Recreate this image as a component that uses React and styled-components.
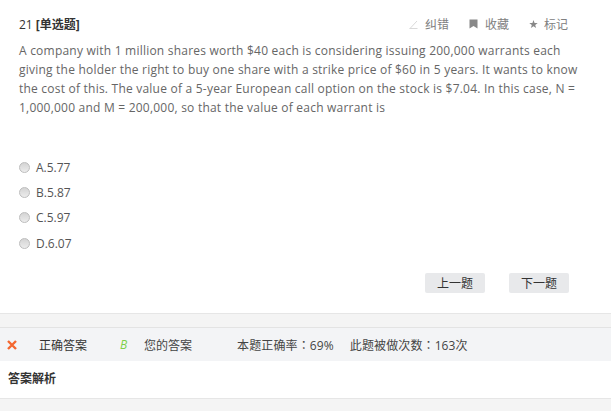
import React from "react";
import styled, { createGlobalStyle } from "styled-components";

const GlobalStyle = createGlobalStyle`
  html, body {
    margin: 0;
    padding: 0;
    background: #f4f4f4;
  }
  body {
    font-family: "Open Sans", "Noto Sans CJK SC", sans-serif;
    font-size: 12px;
  }
`;

const Page = styled.div`
  width: 611px;
  height: 411px;
  overflow: hidden;
  display: flex;
  flex-direction: column;
`;

const Question = styled.section`
  height: 298px;
  background: #fff;
  padding: 15px 19px 0 19px;
  border-bottom: 1px solid #e6e6e6;
`;

const TitleRow = styled.div`
  display: flex;
  justify-content: space-between;
  align-items: center;
  height: 18px;
`;

const Title = styled.div`
  font-size: 12px;
  color: #333;
  b {
    font-weight: 700;
  }
`;

const Tools = styled.div`
  display: flex;
  gap: 20px;
  padding-right: 24px;
`;

const Tool = styled.span`
  display: flex;
  align-items: center;
  gap: ${(p) => p.$gap || 7}px;
  font-size: 12px;
  color: #808080;
  svg {
    display: block;
  }
`;

const Stem = styled.p`
  margin: 8px 0 0;
  font-size: 12px;
  line-height: 19px;
  color: #666;
  white-space: nowrap;
  letter-spacing: 0.22px;
`;

const Options = styled.ul`
  list-style: none;
  margin: 41px 0 0;
  padding: 0;
  display: flex;
  flex-direction: column;
  gap: 7.4px;
`;

const Option = styled.li`
  display: flex;
  align-items: center;
  gap: 6px;
  height: 18px;
  font-size: 12px;
  color: #555;
`;

const Radio = styled.span`
  width: 11px;
  height: 11px;
  box-sizing: border-box;
  border-radius: 50%;
  border: 1px solid #bdbdbd;
  background: linear-gradient(#d4d4d4, #ececec);
`;

const Pager = styled.div`
  display: flex;
  justify-content: flex-end;
  gap: 24px;
  margin-top: 21px;
  padding-right: 23px;
`;

const PageButton = styled.button`
  width: 60px;
  height: 20px;
  border: 0;
  border-radius: 2px;
  background: #e8e9eb;
  color: #333;
  font: inherit;
  font-size: 12px;
  padding: 0;
`;

const AnswerBar = styled.div`
  margin-top: 13px;
  height: 33px;
  border-top: 1px solid #e3e3e3;
  background: #f3f4f6;
  display: flex;
  align-items: center;
  padding-left: 7px;
  font-size: 12px;
  color: #333;
`;

const Cross = styled.svg`
  width: 10px;
  height: 10px;
  margin-right: 22px;
`;

const Letter = styled.i`
  color: #7ed04b;
  margin-left: 33px;
  width: 24px;
`;

const Label = styled.span`
  color: ${(p) => p.$color || "#333"};
  margin-left: ${(p) => p.$left || 0}px;
`;

const Stat = styled.span`
  color: #444;
  letter-spacing: 0.12px;
  margin-left: ${(p) => p.$left}px;
`;

// the reference centres the full-width colon in its cell, as the TC face does
const Colon = styled.span`
  font-family: "Noto Sans CJK TC", sans-serif;
`;

const Analysis = styled.div`
  height: 29px;
  background: #fff;
  border-bottom: 1px solid #e6e6e6;
  padding: 8px 8px 0;
  font-size: 12px;
  font-weight: 700;
  color: #333;
`;

export default function App() {
  return (
    <Page>
      <GlobalStyle />
      <Question>
        <TitleRow>
          <Title>
            21 <b>[单选题]</b>
          </Title>
          <Tools>
            <Tool>
              <svg width="9" height="9" viewBox="0 0 9 9">
                <path d="M1 8.5 L8 1 M0.5 8.5 H8.5" stroke="#d9d9d9" strokeWidth="1" fill="none" />
              </svg>
              纠错
            </Tool>
            <Tool>
              <svg width="9" height="10" viewBox="0 0 9 10">
                <path d="M0.5 0.5 H8.5 V9.5 L4.5 7 L0.5 9.5 Z" fill="#888" />
              </svg>
              收藏
            </Tool>
            <Tool $gap={6}>
              <svg width="9" height="10" viewBox="0 0 10 10">
                <path d="M5 0.5 L6.2 3.8 L9.7 3.9 L6.9 6 L7.9 9.4 L5 7.4 L2.1 9.4 L3.1 6 L0.3 3.9 L3.8 3.8 Z" fill="#888" />
              </svg>
              标记
            </Tool>
          </Tools>
        </TitleRow>
        <Stem>
          A company with 1 million shares worth $40 each is considering issuing 200,000 warrants each
          <br />
          giving the holder the right to buy one share with a strike price of $60 in 5 years. It wants to know
          <br />
          the cost of this. The value of a 5-year European call option on the stock is $7.04. In this case, N =
          <br />
          1,000,000 and M = 200,000, so that the value of each warrant is
        </Stem>
        <Options>
          {["A.5.77", "B.5.87", "C.5.97", "D.6.07"].map((o) => (
            <Option key={o}>
              <Radio />
              {o}
            </Option>
          ))}
        </Options>
        <Pager>
          <PageButton>上一题</PageButton>
          <PageButton>下一题</PageButton>
        </Pager>
      </Question>
      <AnswerBar>
        <Cross viewBox="0 0 10 10">
          <path d="M1 1 L9 9 M9 1 L1 9" stroke="#f4662f" strokeWidth="2.4" />
        </Cross>
        <Label>正确答案</Label>
        <Letter>B</Letter>
        <Label $color="#444">您的答案</Label>
        <Stat $left={45}>本题正确率<Colon>：</Colon>69%</Stat>
        <Stat $left={16}>此题被做次数<Colon>：</Colon>163次</Stat>
      </AnswerBar>
      <Analysis>答案解析</Analysis>
    </Page>
  );
}
